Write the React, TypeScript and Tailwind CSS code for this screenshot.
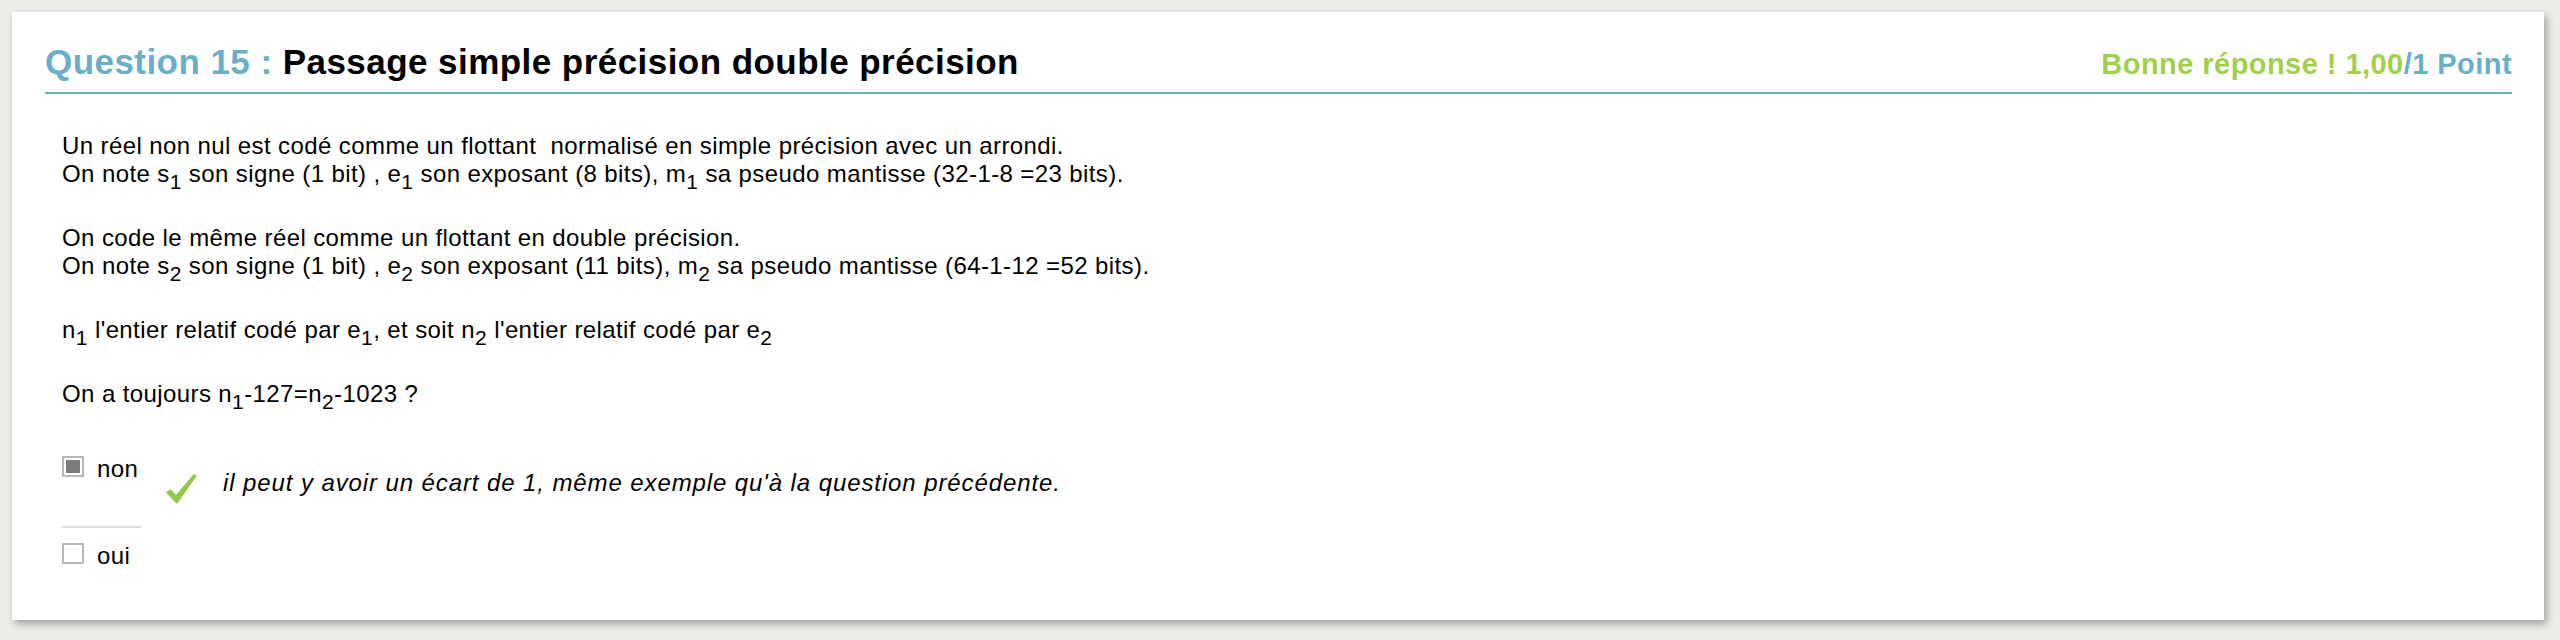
import React from "react";

const font = { fontFamily: '"Liberation Sans", Arial, Helvetica, sans-serif' };

/** Case à cocher en lecture seule (style "revue de quiz"). */
function Box({ checked }: { checked?: boolean }) {
  return (
    <span className="mt-[1px] flex h-[21px] w-[22px] shrink-0 border-2 border-[#b8b8b8] p-[2px]">
      <span className={checked ? "h-full w-full bg-[#7b7b7b]" : "h-full w-full bg-white"} />
    </span>
  );
}

function Check() {
  return (
    <svg width="31" height="30" viewBox="0 0 31 30" className="mt-[5px] shrink-0">
      <path d="M0 18.5 L4.5 15 L10 21 L26 2 L28 0 L31 1.5 L11 30 Z" fill="#94c948" />
    </svg>
  );
}

function S({ children }: { children: React.ReactNode }) {
  return <sub className="bottom-[-7px] text-[21px]">{children}</sub>;
}

export default function App() {
  return (
    <div className="min-h-[640px] bg-[#eeede9] pb-[18px] pl-[12px] pr-[16px] pt-[12px]" style={font}>
      <div className="bg-white pb-[50px] pl-[33px] pr-[32px] pt-[30px] shadow-[3px_4px_8px_rgba(0,0,0,0.32)]">
        <div className="flex items-baseline justify-between border-b-2 border-[#69afc8] pb-[10px]">
          <h2 className="text-[35px] font-bold leading-[40px] tracking-[0.45px] text-black">
            <span className="text-[#69afc8]">Question 15 : </span>
            Passage simple précision double précision
          </h2>
          <div className="text-[29px] font-bold leading-[34px] tracking-[0.45px]">
            <span className="text-[#a2cf4c]">Bonne réponse ! 1,00</span>
            <span className="text-[#69afc8]">/1 Point</span>
          </div>
        </div>

        <div className="pl-[17px] pt-[38px] text-[24px] leading-[28px] tracking-[0.4px] text-black">
          <p>
            Un réel non nul est codé comme un flottant{"\u00a0"} normalisé en simple précision avec un arrondi.
            <br />
            On note s<S>1</S> son signe (1 bit) , e<S>1</S> son exposant (8 bits), m<S>1</S> sa pseudo mantisse
            (32-1-8 =23 bits).
          </p>
          <p className="mt-[36px]">
            On code le même réel comme un flottant en double précision.
            <br />
            On note s<S>2</S> son signe (1 bit) , e<S>2</S> son exposant (11 bits), m<S>2</S> sa pseudo mantisse
            (64-1-12 =52 bits).
          </p>
          <p className="mt-[36px]">
            n<S>1</S> l'entier relatif codé par e<S>1</S>, et soit n<S>2</S> l'entier relatif codé par e<S>2</S>
          </p>
          <p className="mt-[36px]">
            On a toujours n<S>1</S>-127=n<S>2</S>-1023 ?
          </p>

          <div className="mt-[47px] flex">
            <div className="w-[79px] shrink-0">
              <div className="flex gap-[13px] border-b-2 border-[#e2dfda] pb-[43px]">
                <Box checked />
                <span>non</span>
              </div>
              <div className="flex gap-[13px] pt-[14px]">
                <Box />
                <span>oui</span>
              </div>
            </div>
            <div className="ml-[25px] flex h-fit items-start gap-[26px] pt-[14px]">
              <Check />
              <span className="italic tracking-[0.9px]">
                il peut y avoir un écart de 1, même exemple qu'à la question précédente.
              </span>
            </div>
          </div>
        </div>
      </div>
    </div>
  );
}
